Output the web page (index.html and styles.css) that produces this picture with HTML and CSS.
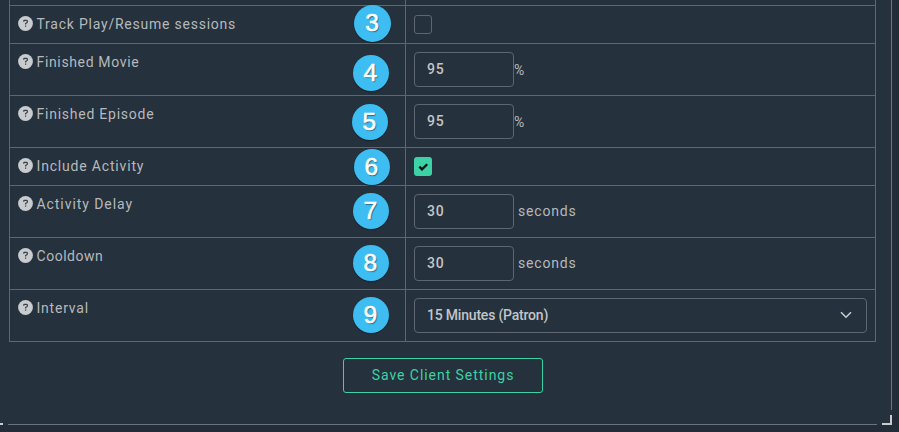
FILE: index.html
```
<!DOCTYPE html>
<html lang="en">
<head>
<meta charset="utf-8">
<title>Client Settings</title>
<link rel="stylesheet" href="styles.css">
</head>
<body>
<svg width="0" height="0" class="defs" aria-hidden="true">
  <symbol id="help" viewBox="0 0 15 15"><circle cx="7.5" cy="7.5" r="7.4" fill="#c9cccf"/><path d="M5.8 5.7V4.8Q5.8 4.3 6.4 4.3H8.6Q9.3 4.3 9.3 5V6Q9.3 6.5 8.8 6.8L7.6 7.5V8.6M7.6 9.6V10.8" fill="none" stroke="#35414e" stroke-width="1.25"/></symbol>
</svg>
<main class="panel">
  <div class="table">
    <div class="row stub"><div class="label"></div><div class="value"></div></div>
    <div class="row short"><div class="label"><svg class="help"><use href="#help"/></svg><span class="t1">Track Play/Resume sessions</span><b class="badge b3">3</b></div><div class="value"><span class="check"></span></div></div>
    <div class="row"><div class="label"><svg class="help"><use href="#help"/></svg><span class="t2">Finished Movie</span><b class="badge b4">4</b></div><div class="value"><span class="input">95</span><span class="pct">%</span></div></div>
    <div class="row"><div class="label"><svg class="help"><use href="#help"/></svg><span class="t3">Finished Episode</span><b class="badge b5">5</b></div><div class="value"><span class="input">95</span><span class="pct">%</span></div></div>
    <div class="row short"><div class="label"><svg class="help"><use href="#help"/></svg><span class="t4">Include Activity</span><b class="badge b6">6</b></div><div class="value"><span class="check on"><svg width="18" height="19" viewBox="0 0 18 19"><path d="M5.3 9.7L8 12.3L13.2 7.2" fill="none" stroke="#0b1215" stroke-width="2.3"/></svg></span></div></div>
    <div class="row"><div class="label"><svg class="help"><use href="#help"/></svg><span class="t5">Activity Delay</span><b class="badge b7">7</b></div><div class="value"><span class="input">30</span><span class="unit">seconds</span></div></div>
    <div class="row"><div class="label"><svg class="help"><use href="#help"/></svg><span class="t6">Cooldown</span><b class="badge b8">8</b></div><div class="value"><span class="input">30</span><span class="unit">seconds</span></div></div>
    <div class="row last"><div class="label"><svg class="help"><use href="#help"/></svg><span class="t7">Interval</span><b class="badge b9">9</b></div><div class="value"><span class="input select"><span>15 Minutes (Patron)</span><svg width="12" height="8" viewBox="0 0 12 8"><path d="M1 1.2L6 6.2L11 1.2" fill="none" stroke="#c9cccf" stroke-width="1.6"/></svg></span></div></div>
  </div>
  <button class="save"><span>Save Client Settings</span></button>
  <i class="edge-right"></i><i class="edge-bottom"></i><i class="corner"></i><i class="corner-left"></i>
</main>
</body>
</html>
```
FILE: styles.css
```
* { box-sizing: border-box; }
body { margin: 0; height: 432px; overflow: hidden; background: #222d39; color: #b5b9bd; font: 14px/20px Roboto, sans-serif; }
.defs { position: absolute; }
.panel { position: relative; width: 892px; height: 425px; background: #25313c; display: flex; flex-direction: column; align-items: flex-start; }
.table { width: 867px; margin-left: 9px; border: solid #5e6771; border-width: 0 1px 1px; }
.row { display: flex; height: 52px; border-top: 1px solid #5e6771; }
.row.stub { height: 5px; border-top: 0; }
.row.short { height: 38px; }
.label { position: relative; width: 396px; flex: none; border-right: 1px solid #5e6771; padding: 8px 0 0 7.5px; display: flex; align-items: flex-start; white-space: nowrap; }
.stub .label { padding: 0; }
.help { width: 15px; height: 15px; margin: 2px 4px 0 0; flex: none; }
.value { flex: 1; display: flex; align-items: flex-start; padding: 8px 8px 0; }
.stub .value { padding: 0; }
.t1 { letter-spacing: .77px; }
.t2 { letter-spacing: .65px; }
.t3 { letter-spacing: .76px; }
.t4 { letter-spacing: .82px; }
.t5 { letter-spacing: .93px; }
.t6 { letter-spacing: .52px; }
.t7 { letter-spacing: .78px; }
.input { display: flex; align-items: center; width: 100px; height: 35px; padding: 0 12px 1px; border: 1px solid #5e6771; border-radius: 4px; font-weight: 500; color: #c2c5c9; font-size: 14px; letter-spacing: .7px; }
.pct { margin-top: 8px; font-size: 14px; letter-spacing: 0; }
.unit { margin: 7px 0 0 4px; letter-spacing: .82px; }
.select { width: 453px; justify-content: space-between; padding-right: 14px; letter-spacing: -.2px; }
.check { width: 18px; height: 19px; margin-top: 1px; border: 1px solid #5e6771; border-radius: 3px; }
.check.on { border: 0; background: #3cd2a5; }
.check svg { display: block; }
.badge { position: absolute; width: 36px; height: 36px; border-radius: 50%; background: #3dbdf1; box-shadow: 0 1px 1px #17202a; color: #fff; font: 24.5px/36px "Liberation Sans", sans-serif; -webkit-text-stroke: .6px #fff; text-align: center; padding-right: 1.5px; text-shadow: 1px 1px 1px #245c78; }
.b3 { left: 344px; top: -1.5px; width: 37px; height: 37px; padding-right: 1px; }
.b4 { left: 343px; top: 10.5px; }
.b5 { left: 342px; top: 7.5px; }
.b6 { left: 344px; top: .5px; }
.b7 { left: 343px; top: 6.5px; }
.b8 { left: 343px; top: 6.5px; }
.b9 { left: 343px; top: 6.5px; }
.save { width: 200px; height: 35px; margin: 16px 0 0 343px; border: 1px solid #3cd2a5; border-radius: 3px; background: transparent; color: #3cd2a5; font: 14px/20px Roboto, sans-serif; letter-spacing: .95px; padding: 0 0 1px; }
.edge-right { position: absolute; right: 0; top: 0; width: 1px; height: 410px; background: #6b747d; }
.edge-bottom { position: absolute; left: 8px; bottom: 0; width: 869px; height: 1px; background: #6b747d; }
.corner { position: absolute; right: 0; bottom: 0; width: 10px; height: 10px; border: solid #c9cccf; border-width: 0 2px 2px 0; }
.corner-left { position: absolute; left: 0; bottom: 0; width: 3px; height: 2px; background: #c9cccf; }
```
